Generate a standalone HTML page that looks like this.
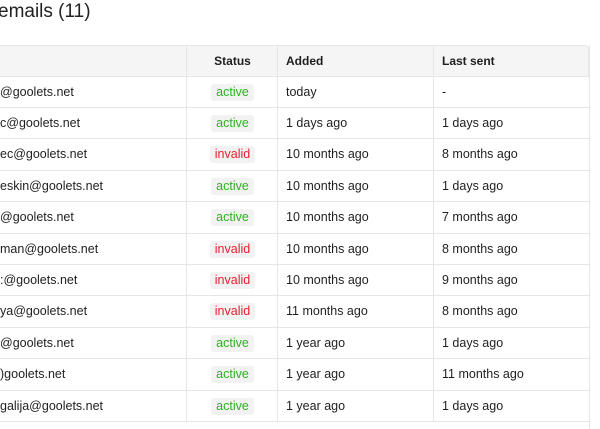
<!DOCTYPE html>
<html><head><style>
body{margin:0;width:600px;height:429px;background:#fff;font-family:"Liberation Sans",sans-serif;color:#1f1f1f;overflow:hidden;position:relative}
h1{position:absolute;left:-2px;top:1px;margin:0;font-size:19px;font-weight:normal;color:#222}
.r{position:absolute;left:-10px;width:599px;height:31.4px;border-bottom:1px solid #e6e6e6;box-sizing:border-box;font-size:12.5px}
.r div{position:absolute;top:0;height:100%;line-height:31px}
.h{background:#f5f5f5;font-weight:bold;font-size:12px}
.c1{left:10px}
.c2{left:196px;width:91px;text-align:center;border-left:1px solid #e6e6e6}
.c3{left:287px;width:156px;border-left:1px solid #e6e6e6;padding-left:8px;box-sizing:border-box}
.c4{left:443px;width:156px;border-left:1px solid #e6e6e6;padding-left:8px;box-sizing:border-box}
.b{display:inline-block;background:#f2f2f2;border-radius:3px;padding:0 5px;line-height:17px;font-size:12.5px}
.g{color:#2cb31f}.x{color:#e5222f}
</style></head><body>
<h1>emails (11)</h1>
<div class="r h" style="top:45px;height:31.5px;border-top:1px solid #e6e6e6;border-right:1px solid #e6e6e6;border-radius:0 4px 0 0"><div class="c1"></div><div class="c2">Status</div><div class="c3">Added</div><div class="c4">Last sent</div></div>
<div style="position:absolute;right:10px;top:45px;width:1px;height:384px;background:#e6e6e6"></div>
<div class="r" style="top:76.5px"><div class="c1">@goolets.net</div><div class="c2"><span class="b g">active</span></div><div class="c3">today</div><div class="c4">-</div></div>
<div class="r" style="top:108px"><div class="c1">c@goolets.net</div><div class="c2"><span class="b g">active</span></div><div class="c3">1 days ago</div><div class="c4">1 days ago</div></div>
<div class="r" style="top:139.4px"><div class="c1">ec@goolets.net</div><div class="c2"><span class="b x">invalid</span></div><div class="c3">10 months ago</div><div class="c4">8 months ago</div></div>
<div class="r" style="top:170.8px"><div class="c1">eskin@goolets.net</div><div class="c2"><span class="b g">active</span></div><div class="c3">10 months ago</div><div class="c4">1 days ago</div></div>
<div class="r" style="top:202.2px"><div class="c1">@goolets.net</div><div class="c2"><span class="b g">active</span></div><div class="c3">10 months ago</div><div class="c4">7 months ago</div></div>
<div class="r" style="top:233.6px"><div class="c1">man@goolets.net</div><div class="c2"><span class="b x">invalid</span></div><div class="c3">10 months ago</div><div class="c4">8 months ago</div></div>
<div class="r" style="top:265px"><div class="c1">:@goolets.net</div><div class="c2"><span class="b x">invalid</span></div><div class="c3">10 months ago</div><div class="c4">9 months ago</div></div>
<div class="r" style="top:296.4px"><div class="c1">ya@goolets.net</div><div class="c2"><span class="b x">invalid</span></div><div class="c3">11 months ago</div><div class="c4">8 months ago</div></div>
<div class="r" style="top:327.8px"><div class="c1">@goolets.net</div><div class="c2"><span class="b g">active</span></div><div class="c3">1 year ago</div><div class="c4">1 days ago</div></div>
<div class="r" style="top:359.2px"><div class="c1">)goolets.net</div><div class="c2"><span class="b g">active</span></div><div class="c3">1 year ago</div><div class="c4">11 months ago</div></div>
<div class="r" style="top:390.6px"><div class="c1">galija@goolets.net</div><div class="c2"><span class="b g">active</span></div><div class="c3">1 year ago</div><div class="c4">1 days ago</div></div>
</body></html>
